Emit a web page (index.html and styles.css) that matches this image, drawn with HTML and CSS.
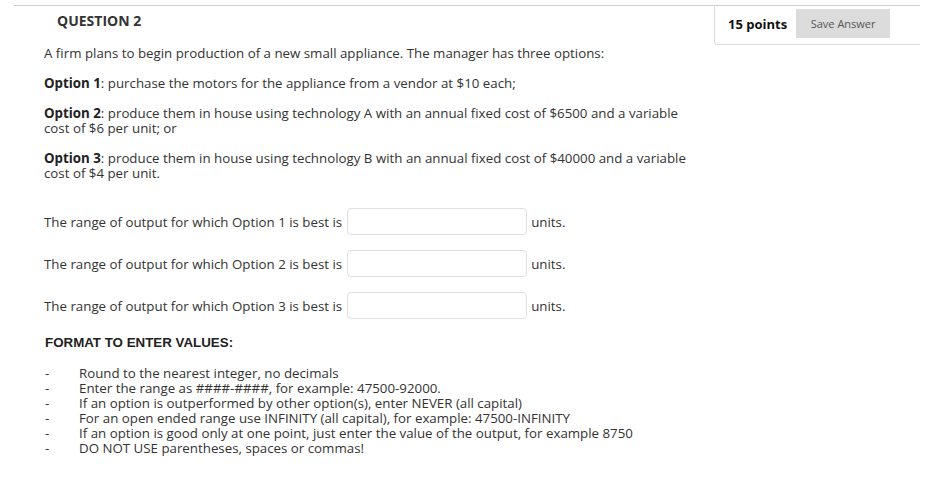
FILE: index.html
```html
<!DOCTYPE html>
<html>
<head>
<meta charset="utf-8">
<link rel="stylesheet" href="styles.css">
</head>
<body>
<div class="question">
  <div class="q-header">
    <h2 class="q-title">QUESTION 2</h2>
    <div class="points-box">
      <span class="points">15 points</span>
      <button class="save-btn">Save Answer</button>
    </div>
  </div>
  <div class="q-body">
    <p class="intro">A firm plans to begin production of a new small appliance. The manager has three options:</p>
    <p class="opt"><b>Option 1</b>: purchase the motors for the appliance from a vendor at $10 each;</p>
    <p class="opt"><b>Option 2</b>: produce them in house using technology A with an annual fixed cost of $6500 and a variable<br>cost of $6 per unit; or</p>
    <p class="opt"><b>Option 3</b>: produce them in house using technology B with an annual fixed cost of $40000 and a variable<br>cost of $4 per unit.</p>
    <div class="answers">
      <div class="ans-row"><span>The range of output for which Option 1 is best is</span><input class="ans-input" type="text"><span>units.</span></div>
      <div class="ans-row"><span>The range of output for which Option 2 is best is</span><input class="ans-input" type="text"><span>units.</span></div>
      <div class="ans-row"><span>The range of output for which Option 3 is best is</span><input class="ans-input" type="text"><span>units.</span></div>
    </div>
    <h3 class="format-title">FORMAT TO ENTER VALUES:</h3>
    <ul class="rules">
      <li><span class="dash">-</span><span>Round to the nearest integer, no decimals</span></li>
      <li><span class="dash">-</span><span>Enter the range as ####-####, for example: 47500-92000.</span></li>
      <li><span class="dash">-</span><span>If an option is outperformed by other option(s), enter NEVER (all capital)</span></li>
      <li><span class="dash">-</span><span>For an open ended range use INFINITY (all capital), for example: 47500-INFINITY</span></li>
      <li><span class="dash">-</span><span>If an option is good only at one point, just enter the value of the output, for example 8750</span></li>
      <li><span class="dash">-</span><span>DO NOT USE parentheses, spaces or commas!</span></li>
    </ul>
  </div>
</div>
</body>
</html>
```
FILE: styles.css
```css
html, body {
  margin: 0;
  padding: 0;
  background: #fff;
}
body {
  font-family: "Open Sans", sans-serif;
  font-size: 13.3px;
  color: #333;
}
.question {
  margin: 5px 11px 0 14px;
  border-top: 1px solid #cfcfcf;
}
.q-header {
  display: flex;
  justify-content: space-between;
  align-items: flex-start;
}
.q-title {
  margin: 0;
  padding: 5px 0 0 43px;
  font-size: 14px;
  font-weight: 700;
  color: #333;
}
.points-box {
  display: flex;
  align-items: center;
  gap: 9px;
  width: 206px;
  box-sizing: border-box;
  padding: 3px 30px 6px 13px;
  border-left: 1px solid #ddd;
  border-bottom: 1px solid #ddd;
  border-bottom-left-radius: 4px;
  flex-shrink: 0;
}
.points {
  font-weight: 700;
  color: #111;
  font-size: 13px;
  white-space: nowrap;
}
.save-btn {
  width: 94px;
  height: 29px;
  flex-shrink: 0;
  border: none;
  background: #dcdcdc;
  color: #555;
  font-family: "Open Sans", sans-serif;
  font-size: 11px;
  padding: 0;
}
.q-body {
  padding: 0 0 0 30px;
  margin-top: 1px;
}
p {
  margin: 0;
  line-height: 15px;
}
.intro {
  margin-bottom: 15px;
}
.opt {
  margin-bottom: 15px;
}
.opt b {
  font-weight: 700;
  color: #222;
}
.answers {
  margin-top: 27px;
  display: flex;
  flex-direction: column;
  gap: 15px;
}
.ans-row {
  display: flex;
  align-items: center;
  gap: 5px;
  height: 27px;
}
.ans-row .ans-input + span {
  margin-left: -1px;
}
.ans-input {
  width: 180px;
  height: 27px;
  box-sizing: border-box;
  border: 1px solid #e0e0e0;
  border-radius: 4px;
  margin: 0;
}
.format-title {
  margin: 16px 0 0 1px;
  font-family: "Liberation Sans", Arial, sans-serif;
  font-size: 13.33px;
  font-weight: 700;
  color: #222;
}
.rules {
  list-style: none;
  margin: 16px 0 0 0;
  padding: 0;
}
.rules li {
  display: flex;
  line-height: 15px;
}
.dash {
  width: 34px;
  padding-left: 1px;
}
```
